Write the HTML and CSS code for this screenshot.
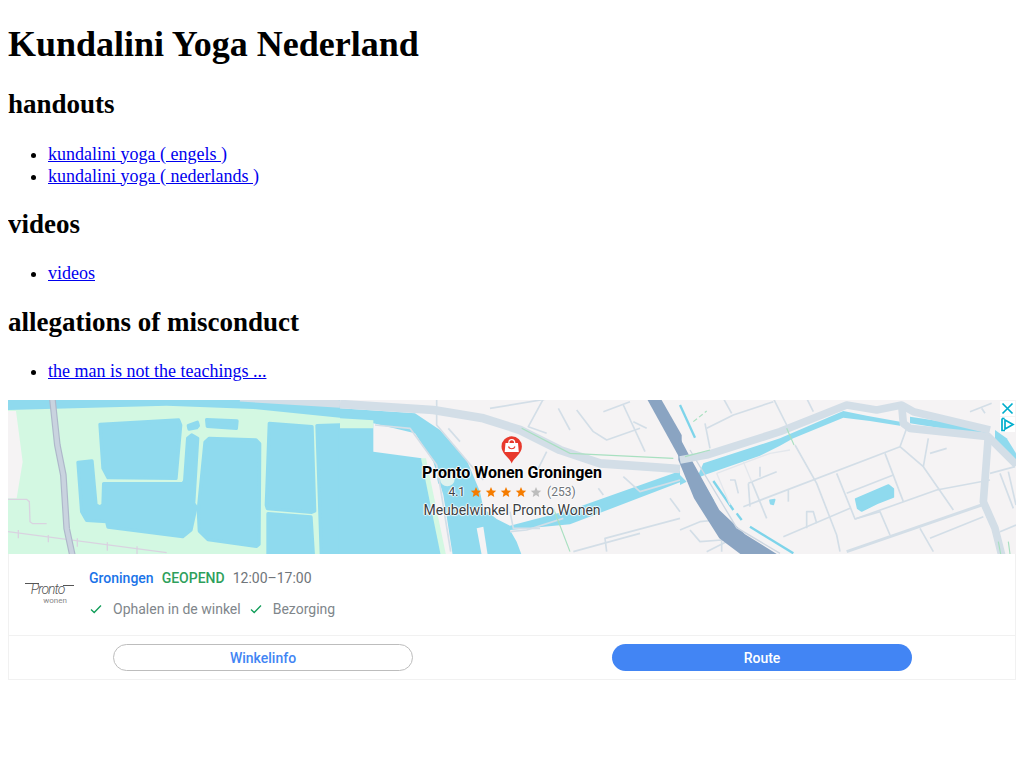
FILE: index.html
```html
<!DOCTYPE html>
<html lang="nl">
<head>
<meta charset="utf-8">
<title>Kundalini Yoga Nederland</title>
<link rel="stylesheet" href="styles.css">
</head>
<body>
<h1>Kundalini Yoga Nederland</h1>
<h2>handouts</h2>
<ul>
  <li><a href="#">kundalini yoga ( engels )</a></li>
  <li><a href="#">kundalini yoga ( nederlands )</a></li>
</ul>
<h2>videos</h2>
<ul>
  <li><a href="#">videos</a></li>
</ul>
<h2>allegations of misconduct</h2>
<ul>
  <li><a href="#">the man is not the teachings ...</a></li>
</ul>

<section class="ad">
  <div class="map">
    <svg class="map-art" viewBox="8 400 1008 154" width="1008" height="154" aria-hidden="true">
      <rect class="land" x="8" y="400" width="1008" height="154"/>
      <g transform="translate(0 395) scale(.33333)">
        <path class="green" d="M24 15 H1020 V477 H24 V310 H50 L68 200 L48 48 H24 Z"/>
        <path class="water" d="M24 15 H1020 V68 L760 42 L500 32 L24 45 Z"/>
        <path class="road-main" d="M720 8 L1020 27"/>
        <g class="pool">
          <path d="M300 88 L536 75 L542 90 L528 250 L324 248 L309 220 Z"/>
          <path d="M565 92 L592 82 L595 92 L590 98 L567 102 Z"/>
          <path d="M620 74 L711 78 L709 100 L622 94 Z"/>
          <path d="M234 202 L276 198 L288 330 L300 336 L309 330 L311 266 L548 266 L554 258 L563 130 L575 120 L593 130 L581 325 L588 336 L573 405 L548 425 L324 396 L320 380 L260 376 L245 350 Z"/>
          <path d="M615 142 L628 130 L768 135 L779 146 L777 448 L770 454 L624 434 L598 408 L595 345 Z"/>
          <path d="M808 85 L936 95 L944 348 L935 352 L802 341 L799 330 Z"/>
          <path d="M804 356 L933 366 L940 480 H804 Z"/>
          <path d="M951 92 L1020 90 V480 H964 Z"/>
        </g>
        <g class="rail">
          <path d="M24 410 L500 473"/>
          <path d="M55 405 V430 M145 420 V442 M232 430 V455 M322 442 V467 M411 454 V477"/>
          <path d="M24 313 H80 L88 320 L90 380 L98 386 H140"/>
        </g>
        <path class="road-edge" d="M157 10 L172 150 L190 240 L200 400 L217 480"/>
        <path class="road-dark" d="M157 10 L172 150 L190 240 L200 400 L217 480"/>
      </g>

      <g transform="translate(340 395) scale(.33333)">
        <path class="water" d="M0 40 L225 55 L300 105 L380 195 L420 290 L430 340 L470 372 L510 392 L690 345 L1020 228 V262 L690 388 L510 405 L530 440 L545 480 H0 Z"/>
        <path class="green" d="M0 70 L100 76 L100 100 H0 Z"/>
        <path class="land" d="M100 85 L225 115 L280 200 L310 300 L338 480 H310 L245 190 L100 170 Z"/>
        <path class="green" d="M243 190 L258 190 L318 480 H302 Z"/>
        <path class="land" d="M410 400 L430 395 L443 480 H425 Z"/>
        <circle class="ring" cx="322" cy="252" r="26"/>
        <path class="thin" d="M105 90 L210 100 L290 210 L332 470"/>
        <g class="thin">
          <path d="M290 10 V90 L430 255"/>
          <path d="M325 100 L360 140"/>
          <path d="M450 40 L620 12"/>
          <path d="M610 12 L565 95 L620 115"/>
          <path d="M655 40 L690 105"/>
          <path d="M710 45 L760 110 L800 135 L900 100"/>
          <path d="M790 50 L870 20"/>
          <path d="M850 30 L915 170"/>
          <path d="M880 80 L920 100"/>
          <path d="M620 170 L590 230"/>
          <path d="M510 350 L520 400 L600 400"/>
          <path d="M510 410 L560 405 L670 370"/>
          <path d="M800 470 L795 430 L1020 370"/>
          <path d="M990 310 L1020 350"/>
          <path d="M700 470 L900 415"/>
          <path d="M850 245 L900 290 L1020 255"/>
          <path d="M775 280 L790 300"/>
        </g>
        <path class="road-big" d="M0 27 L280 45 L430 70 L540 105 L660 165 L780 205 L1020 222"/>
        <path class="canal-shape" d="M920 10 H962 L1025 120 V200 Z"/>
        <path class="thin-green" d="M545 100 L690 175 L1000 190"/>
        <path class="thin-green" d="M640 340 L690 470"/>
      </g>

      <g transform="translate(680 395) scale(.33333)">
        <path class="water" d="M70 205 L300 130 L490 48 L560 62 L660 80 L660 92 L570 78 L490 68 L340 130 L300 152 L240 182 L80 238 L50 250 Z"/>
        <path class="water" d="M690 65 L920 100 L925 122 L690 85 Z"/>
        <path class="water" d="M945 105 L980 130 L1008 175 V195 L960 150 L945 130 Z"/>
        <path class="water" d="M0 240 L20 260 L0 270 Z"/>
        <path class="pool-small" d="M527 312 L625 270 L640 282 L640 306 L592 325 L545 348 L533 340 Z"/>
        <path class="pool-small" d="M270 316 L284 314 L280 328 L272 326 Z"/>
        <g class="cyan">
          <path d="M0 30 L45 128"/>
          <path d="M100 258 L160 345"/>
          <path d="M170 355 L185 375"/>
          <path d="M210 395 L340 475"/>
          <path d="M55 245 L100 320"/>
        </g>
        <g class="thin">
          <path d="M80 100 L160 60 L280 20"/>
          <path d="M130 10 L155 55"/>
          <path d="M280 10 L320 90"/>
          <path d="M380 10 L400 50"/>
          <path d="M75 85 L90 160"/>
          <path d="M345 150 L410 265 L470 420 L480 470"/>
          <path d="M190 335 L660 155 L680 100"/>
          <path d="M470 235 L525 372 L600 350 L630 420"/>
          <path d="M500 295 L640 240"/>
          <path d="M525 372 L770 285 L930 255"/>
          <path d="M615 175 L670 320"/>
          <path d="M660 155 L730 215 L820 345"/>
          <path d="M730 215 L745 130"/>
          <path d="M750 175 L800 160"/>
          <path d="M310 425 L510 340"/>
          <path d="M380 400 V350 H400 L410 385"/>
          <path d="M205 265 L290 230"/>
          <path d="M240 215 V245"/>
          <path d="M215 260 L260 370"/>
          <path d="M205 265 L210 335"/>
          <path d="M150 255 H165 L175 295"/>
          <path d="M325 285 V320"/>
          <path d="M870 50 L935 25"/>
          <path d="M905 40 L915 55"/>
          <path d="M750 430 L910 365"/>
          <path d="M720 400 L760 470"/>
          <path d="M930 235 L1005 215"/>
          <path d="M960 235 L1000 340"/>
          <path d="M985 230 L1008 330"/>
          <path d="M960 410 L1008 390"/>
          <path d="M0 405 L60 380 L110 375 L125 405"/>
          <path d="M30 405 L60 440 L125 435 V470"/>
          <path d="M80 470 L160 430"/>
        </g>
        <g class="faint">
          <path d="M110 235 L270 175 L330 165"/>
          <path d="M110 235 L150 330"/>
          <path d="M190 200 L215 260"/>
        </g>
        <path class="canal-shape" d="M-5 120 L35 195 L118 345 L195 418 L295 480 H185 L118 430 L42 310 L-5 195 Z"/>
        <path class="canal-line" d="M30 165 L170 398 L300 475"/>
        <path class="road-wide" d="M500 470 L905 330"/>
        <path class="road-main" d="M0 195 L80 180 L300 110 L500 30 L590 45 L665 30 L700 50 L930 105"/>
        <path class="road-main" d="M665 30 L670 85 L690 100 L925 125 L1010 210"/>
        <path class="road-main" d="M925 122 L910 320 L945 400 L965 480"/>
        <path class="thin-green" d="M320 100 L342 150"/>
        <path class="thin-green" d="M15 185 L90 165"/>
        <path class="thin-green" d="M40 80 L80 48" stroke-dasharray="14 8"/>
        <path class="thin-green" d="M955 440 L962 477 M985 440 L990 477"/>
      </g>

      <path class="pin" d="M511.700 463.500 C510 458 501.500 454 501.500 446.500 A10.200 10.200 0 0 1 521.900 446.500 C521.900 454 513.500 458 511.700 463.500 Z"/>
      <path class="bag" d="M505.500 443 H518 L518.800 452 H504.700 Z"/>
      <path class="bag-line" d="M508.800 443 C508.800 438.500 514.700 438.500 514.700 443"/>
      <path class="bag-smile" d="M508.500 446.500 C509.500 449.500 514 449.500 515 446.500"/>
    </svg>

    <div class="place">
      <div class="place-name">Pronto Wonen Groningen</div>
      <div class="place-rating">
        <span>4.1</span>
        <span class="stars">
          <svg class="star on" viewBox="0 0 24 24"><path d="M12 2l3 7 7.500.7-5.700 5 1.700 7.300L12 18.200 5.500 22l1.700-7.300-5.700-5L9 9z"/></svg>
          <svg class="star on" viewBox="0 0 24 24"><path d="M12 2l3 7 7.500.7-5.700 5 1.700 7.300L12 18.200 5.500 22l1.700-7.300-5.700-5L9 9z"/></svg>
          <svg class="star on" viewBox="0 0 24 24"><path d="M12 2l3 7 7.500.7-5.700 5 1.700 7.300L12 18.200 5.500 22l1.700-7.300-5.700-5L9 9z"/></svg>
          <svg class="star on" viewBox="0 0 24 24"><path d="M12 2l3 7 7.500.7-5.700 5 1.700 7.300L12 18.200 5.500 22l1.700-7.300-5.700-5L9 9z"/></svg>
          <svg class="star" viewBox="0 0 24 24"><path d="M12 2l3 7 7.500.7-5.700 5 1.700 7.300L12 18.200 5.500 22l1.700-7.300-5.700-5L9 9z"/></svg>
        </span>
        <span class="count">(253)</span>
      </div>
      <div class="place-type">Meubelwinkel Pronto Wonen</div>
    </div>

    <div class="adchoices">
      <span class="ad-icon">
        <svg viewBox="0 0 15 15" width="15" height="15"><path class="ad-stroke" d="M2.500 2.500 L12.500 12.500 M12.500 2.500 L2.500 12.500"/></svg>
      </span>
      <span class="ad-icon">
        <svg viewBox="0 0 15 15" width="15" height="15"><path class="ad-stroke" d="M5 3 L13 7.500 L5 12 Z"/><path class="ad-stroke" d="M2 1.500 V13.500 H5"/><path class="ad-stroke" d="M2 1.500 H4.500"/></svg>
      </span>
    </div>
  </div>

  <div class="info">
    <div class="logo">
      <svg class="logo-rule" viewBox="0 0 50 8" width="50" height="8" aria-hidden="true"><path d="M0 1.500 H14 M38 3.500 H49"/></svg>
      <div class="logo-name">Pronto</div>
      <div class="logo-sub">wonen</div>
    </div>
    <div class="details">
      <div class="status">
        <span class="city">Groningen</span>
        <span class="open">GEOPEND</span>
        <span class="hours">12:00–17:00</span>
      </div>
      <div class="features">
        <svg class="check" viewBox="0 0 12 10" width="12" height="10" aria-hidden="true"><path d="M1 5.500 L4.200 8.500 L11 1.500"/></svg>
        <span class="feature">Ophalen in de winkel</span>
        <svg class="check" viewBox="0 0 12 10" width="12" height="10" aria-hidden="true"><path d="M1 5.500 L4.200 8.500 L11 1.500"/></svg>
        <span class="feature">Bezorging</span>
      </div>
    </div>
  </div>

  <div class="actions">
    <a class="btn btn-outline" href="#">Winkelinfo</a>
    <a class="btn btn-fill" href="#">Route</a>
  </div>
</section>
</body>
</html>
```
FILE: styles.css
```css
html, body { background: #fff; }
body { margin: 0 8px; font-family: "Liberation Serif", serif; font-size: 18px; color: #000; }
h1 { line-height: 41px; }
h2 { line-height: 31px; }
li { line-height: 22px; }

.ad { display: block; width: 1008px; font-family: Roboto, sans-serif; }

.map { position: relative; height: 154px; overflow: hidden; }
.map-art { display: block; }

.land { fill: #f5f3f4; }
.green { fill: #d3f8e2; }
.water { fill: #8fdaee; }
.pool path { fill: #8fdaee; stroke: #8fdaee; stroke-width: 10; stroke-linejoin: round; }
.pool-small { fill: #8fdaee; stroke: #8fdaee; stroke-width: 5; stroke-linejoin: round; }
.ring { fill: #dff2ee; stroke: #8fdaee; stroke-width: 8; }
.rail { fill: none; stroke: #d9d3e0; stroke-width: 4; }
.road-edge { fill: none; stroke: #aeb8ca; stroke-width: 20; }
.road-dark { fill: none; stroke: #c9d3df; stroke-width: 13; }
.road-main { fill: none; stroke: #d3dee7; stroke-width: 23; stroke-linejoin: round; }
.road-big { fill: none; stroke: #d3dee7; stroke-width: 26; stroke-linejoin: round; }
.road-wide { fill: none; stroke: #d3dee7; stroke-width: 9; }
.canal-shape { fill: #8aa4c2; }
.canal-line { fill: none; stroke: #ced7e1; stroke-width: 4; }
.thin path, path.thin { fill: none; stroke: #d3dee7; stroke-width: 5; stroke-linejoin: round; }
.faint path { fill: none; stroke: #e3e7ec; stroke-width: 4; }
.thin-green { fill: none; stroke: #a8e0c0; stroke-width: 3.500; }
.cyan path { fill: none; stroke: #7ed4ea; stroke-width: 7; }

.pin { fill: #e8392c; }
.bag { fill: #fff; }
.bag-line { fill: none; stroke: #fff; stroke-width: 1.300; }
.bag-smile { fill: none; stroke: #e8392c; stroke-width: 1.200; }

.place {
  position: absolute;
  left: 304px;
  top: 64px;
  width: 400px;
  display: flex;
  flex-direction: column;
  align-items: center;
  text-shadow: -1px 0 1px #fff, 1px 0 1px #fff, 0 -1px 1px #fff, 0 1px 1px #fff;
}
.place-name { font-size: 16px; font-weight: 700; line-height: 18px; color: #000; }
.place-rating { display: flex; align-items: center; height: 18px; margin-top: 1px; font-size: 12px; color: #3c4043; gap: 5px; }
.count { color: #70757a; }
.stars { display: flex; gap: 3px; }
.star { width: 12px; height: 12px; fill: #bdbdbd; display: block; }
.star.on { fill: #f57c00; }
.place-type { font-size: 14px; line-height: 18px; color: #3c4043; }

.adchoices { position: absolute; top: 1px; right: 1px; display: flex; flex-direction: column; gap: 1px; }
.ad-icon { display: block; width: 15px; height: 15px; background: #fff; }
.ad-icon svg { display: block; }
.ad-stroke { fill: none; stroke: #00aecd; stroke-width: 1.700; }

.info {
  display: flex;
  align-items: center;
  height: 82px;
  box-sizing: border-box;
  padding-bottom: 3px;
  border-left: 1px solid #f1f1f1;
  border-right: 1px solid #f1f1f1;
  border-bottom: 1px solid #f1f1f1;
}
.logo { width: 80px; flex: none; display: flex; flex-direction: column; align-items: center; position: relative; color: #555; padding-top: 1px; }
.logo-name { font: italic 300 14px/13px Roboto, sans-serif; letter-spacing: -1px; margin-left: -3px; }
.logo-rule { position: absolute; left: 16px; top: 0; }
.logo-rule path { fill: none; stroke: #555; stroke-width: 1; }
.logo-sub { font-size: 8px; line-height: 9px; margin-left: 12px; color: #888; }

.details { display: flex; flex-direction: column; gap: 13px; }
.status { display: flex; align-items: center; height: 18px; gap: 8px; font-size: 14px; }
.city { color: #1a73e8; font-weight: 500; }
.open { color: #2f9f5c; font-weight: 500; }
.hours { color: #70757a; }
.features { display: flex; align-items: center; height: 18px; font-size: 14px; color: #80868b; }
.check { margin-left: 1px; margin-right: 11px; }
.check path { fill: none; stroke: #0f9d58; stroke-width: 1.300; }
.feature { margin-right: 8px; }

.actions {
  display: flex;
  justify-content: space-between;
  align-items: center;
  height: 44px;
  box-sizing: border-box;
  padding: 0 103px 0 104px;
  border: 1px solid #f1f1f1;
  border-top: 0;
}
.btn {
  display: flex;
  align-items: center;
  justify-content: center;
  width: 300px;
  height: 27px;
  box-sizing: border-box;
  padding-top: 1px;
  border-radius: 14px;
  font-size: 14px;
  font-weight: 500;
  text-decoration: none;
}
.btn-outline { color: #4285f4; background: #fff; border: 1px solid #bdbdbd; }
.btn-fill { color: #fff; background: #4285f4; }
```
